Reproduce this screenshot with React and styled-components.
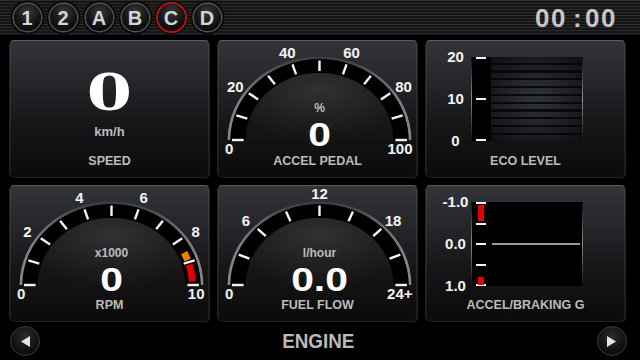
import React from 'react';
import styled, { createGlobalStyle } from 'styled-components';

const Global = createGlobalStyle`
  html, body { margin: 0; padding: 0; background: #000; }
  body { font-family: "Liberation Sans", Arial, sans-serif; }
`;

const SANS = '"Liberation Sans", Arial, sans-serif';

const Screen = styled.div`
  width: 640px;
  height: 360px;
  background: #000;
  display: flex;
  flex-direction: column;
  overflow: hidden;
`;

const TopBar = styled.div`
  height: 35px;
  flex: none;
  box-sizing: border-box;
  display: flex;
  align-items: center;
  gap: 9px;
  padding: 0 23px 0 13.5px;
  background: repeating-linear-gradient(
    to bottom,
    #2c2c2c 0px,
    #2c2c2c 1.5px,
    #151515 1.5px,
    #151515 3px
  );
`;

const ModeButton = styled.div`
  width: 27px;
  height: 27px;
  flex: none;
  border-radius: 50%;
  display: flex;
  align-items: center;
  justify-content: center;
  font: bold 20px/1 ${SANS};
  color: #d4d4d4;
  background: radial-gradient(circle at 50% 30%, #3a3a3a 0%, #161616 50%, #020202 100%);
  box-shadow: 0 0 0 ${p => (p.$active ? '2px' : '1.5px')} ${p => (p.$active ? '#bd1010' : '#545454')},
    0 0 0 3.5px #0b0b0b;
`;

const Clock = styled.div`
  margin-left: auto;
  font: bold 26px/1 ${SANS};
  letter-spacing: 1.5px;
  color: #c6c6c6;
`;

const Colon = styled.span`
  margin: 0 2px 0 6px;
`;

const Grid = styled.div`
  display: grid;
  grid-template-columns: repeat(3, 201px);
  grid-template-rows: 138px 137px;
  gap: 7px;
  padding: 5px 14px 0 9px;
  flex: none;
`;

const Panel = styled.div`
  position: relative;
  box-sizing: border-box;
  display: flex;
  flex-direction: column;
  align-items: center;
  border-radius: 5px;
  border: 1px solid #222327;
  border-top-color: #5a5b60;
  background: linear-gradient(180deg, #333439 0%, #26272b 28%, #151517 65%, #0b0b0b 100%);
  box-shadow: inset 1px 0 0 rgba(255, 255, 255, 0.07), inset -1px 0 0 rgba(255, 255, 255, 0.07);
`;

const Title = styled.div`
  margin-top: auto;
  margin-bottom: 9.5px;
  font: bold 12.5px/13px ${SANS};
  color: #bcbcbc;
  white-space: nowrap;
`;

const BigValue = styled.div`
  margin-top: 24px;
  font: bold 50px/56px "DejaVu Serif", "Liberation Serif", serif;
  color: #fff;
  transform: scaleX(1.3);
`;

const Unit = styled.div`
  margin-top: 3px;
  font: bold 13px/16px ${SANS};
  color: #bdbdbd;
`;

const DialSvg = styled.svg`
  position: absolute;
  top: -8px;
  left: 0;
  overflow: visible;
  pointer-events: none;
`;

const BarRow = styled.div`
  align-self: stretch;
  display: flex;
  align-items: flex-start;
  margin-top: 16px;
  padding-left: 14.5px;
`;

const ScaleLabels = styled.div`
  width: 30px;
  height: 100px;
  margin-top: -8px;
  display: flex;
  flex-direction: column;
  justify-content: space-between;
  align-items: center;
  font: bold 15px/16px ${SANS};
  color: #f4f4f4;
`;

const BarFrame = styled.div`
  width: 112px;
  height: 84px;
  box-sizing: border-box;
  display: flex;
  border-style: solid;
  border-width: 0 1.5px;
  border-image: linear-gradient(to bottom, rgba(110, 110, 118, 0.1), #8c8c94 50%, rgba(110, 110, 118, 0.1)) 1;
  background: #000;
`;

const Track = styled.div`
  position: relative;
  width: 19px;
  flex: none;
  background: #000;
  display: flex;
  flex-direction: column;
  justify-content: space-between;
  align-items: center;
`;

const Tick = styled.div`
  width: 10px;
  height: 2px;
  background: #f2f2f2;
`;

const Marker = styled.div`
  position: absolute;
  left: 6.5px;
  width: 6px;
  background: #e40000;
`;

const Stripes = styled.div`
  flex: 1;
  background:
    repeating-linear-gradient(
      to bottom,
      rgba(0, 0, 0, 0) 0px,
      rgba(0, 0, 0, 0) 5.6px,
      rgba(4, 4, 6, 0.85) 5.6px,
      rgba(4, 4, 6, 0.85) 7.8px
    ),
    radial-gradient(ellipse at 50% 50%, #30333b 0%, #1e2025 55%, #0e0f11 100%);
`;

const Plot = styled.div`
  flex: 1;
  display: flex;
  align-items: center;
  background: #000;
`;

const ZeroLine = styled.div`
  flex: 1;
  height: 2px;
  margin: 0 2px 0 1px;
  background: #9c9c9c;
`;

const BottomBar = styled.div`
  flex: 1;
  display: flex;
  align-items: center;
  justify-content: space-between;
  padding: 0 13px 0 10px;
`;

const NavButton = styled.div`
  width: 30px;
  height: 30px;
  box-sizing: border-box;
  border-radius: 50%;
  border: 1.5px solid #3c3c3c;
  background: radial-gradient(circle at 50% 35%, #2c2c2c 0%, #111 60%, #050505 100%);
  display: flex;
  align-items: center;
  justify-content: center;
`;

const PageName = styled.div`
  font: bold 20.5px/1 ${SANS};
  color: #bababa;
  transform: scaleX(0.92);
`;

function Dial({ id, steps, labels, unit, value, zones = [] }) {
  const cx = 101.5;
  const cy = 107;
  const K = 1.1;
  const P = (f, r) => {
    const a = Math.PI * f;
    return [cx - Math.cos(a) * r * K, cy - Math.sin(a) * r];
  };
  const ring = (r1, r2) =>
    `M ${cx - r2 * K} ${cy} A ${r2 * K} ${r2} 0 0 1 ${cx + r2 * K} ${cy} L ${cx + r1 * K} ${cy} A ${r1 * K} ${r1} 0 0 0 ${cx - r1 * K} ${cy} Z`;
  const dome = (r) => `M ${cx - r * K} ${cy} A ${r * K} ${r} 0 0 1 ${cx + r * K} ${cy} Z`;
  const arc = (f1, f2, r) => {
    const [x1, y1] = P(f1, r);
    const [x2, y2] = P(f2, r);
    return `M ${x1} ${y1} A ${r * K} ${r} 0 0 1 ${x2} ${y2}`;
  };
  const ticks = [];
  for (let i = 0; i <= steps; i++) {
    const f = i / steps;
    const [x1, y1] = P(f, 69);
    const [x2, y2] = P(f, 79.5);
    ticks.push(<line key={i} x1={x1} y1={y1} x2={x2} y2={y2} stroke="#f4f4f4" strokeWidth="2.4" />);
  }
  return (
    <DialSvg width="201" height="146" viewBox="0 0 201 146">
      <defs>
        <linearGradient id={`${id}-rim`} x1="0" y1="0" x2="1" y2="0">
          <stop offset="0" stopColor="#8a8a8e" />
          <stop offset="0.3" stopColor="#4a4a4e" />
          <stop offset="0.5" stopColor="#3a3a3e" />
          <stop offset="0.7" stopColor="#4a4a4e" />
          <stop offset="1" stopColor="#8a8a8e" />
        </linearGradient>
        <radialGradient id={`${id}-dome`} cx="0.5" cy="0.25" r="0.75">
          <stop offset="0" stopColor="#313133" />
          <stop offset="1" stopColor="#141414" />
        </radialGradient>
      </defs>
      <path d={ring(81, 83.5)} fill={`url(#${id}-rim)`} />
      <path d={ring(67, 81)} fill="#000" />
      <path d={dome(67)} fill={`url(#${id}-dome)`} />
      {zones.map((z, i) => (
        <path key={i} d={arc(z.from, z.to, 73.5)} stroke={z.color} strokeWidth="7" fill="none" />
      ))}
      {ticks}
      <g fontFamily={SANS} fontWeight="bold" fontSize="15" fill="#f4f4f4">
        {labels.map(({ f, text }) => {
          if (f === 0)
            return (
              <text key={text} x={cx - 94.5} y={cy + 14} textAnchor="start">
                {text}
              </text>
            );
          if (f === 1)
            return (
              <text key={text} x={cx + 93} y={cy + 14} textAnchor="end">
                {text}
              </text>
            );
          const a = Math.PI * f;
          return (
            <text key={text} x={cx - Math.cos(a) * 104} y={cy - Math.sin(a) * 91.5 + 5.4} textAnchor="middle">
              {text}
            </text>
          );
        })}
      </g>
      <text x={cx} y={cy - 28.2} textAnchor="middle" fontFamily={SANS} fontWeight="bold" fontSize="12" fill="#bdbdbd">
        {unit}
      </text>
      <text
        x={cx}
        y={cy + 6}
        textAnchor="middle"
        fontFamily={SANS}
        fontWeight="bold"
        fontSize="34"
        fill="#fff"
        transform={`translate(${cx} 0) scale(1.2 1) translate(${-cx} 0)`}
      >
        {value}
      </text>
    </DialSvg>
  );
}

function GaugePanel({ title, ...dial }) {
  return (
    <Panel>
      <Dial {...dial} />
      <Title>{title}</Title>
    </Panel>
  );
}

function Arrow({ dir }) {
  return (
    <svg width="9" height="11" viewBox="0 0 9 11">
      {dir === 'left' ? <polygon points="0,5.5 9,0 9,11" fill="#e6e6e6" /> : <polygon points="9,5.5 0,0 0,11" fill="#e6e6e6" />}
    </svg>
  );
}

export default function App() {
  const modes = ['1', '2', 'A', 'B', 'C', 'D'];
  return (
    <Screen>
      <Global />
      <TopBar>
        {modes.map(m => (
          <ModeButton key={m} $active={m === 'C'}>
            {m}
          </ModeButton>
        ))}
        <Clock>
          00<Colon>:</Colon>00
        </Clock>
      </TopBar>
      <Grid>
        <Panel>
          <BigValue>0</BigValue>
          <Unit>km/h</Unit>
          <Title>SPEED</Title>
        </Panel>
        <GaugePanel
          id="pedal"
          title="ACCEL PEDAL"
          steps={10}
          unit="%"
          value="0"
          labels={[
            { f: 0, text: '0' },
            { f: 0.2, text: '20' },
            { f: 0.4, text: '40' },
            { f: 0.6, text: '60' },
            { f: 0.8, text: '80' },
            { f: 1, text: '100' },
          ]}
        />
        <Panel>
          <BarRow>
            <ScaleLabels>
              <span>20</span>
              <span>10</span>
              <span>0</span>
            </ScaleLabels>
            <BarFrame>
              <Track>
                <Tick />
                <Tick />
                <Tick />
              </Track>
              <Stripes />
            </BarFrame>
          </BarRow>
          <Title>ECO LEVEL</Title>
        </Panel>
        <GaugePanel
          id="rpm"
          title="RPM"
          steps={10}
          unit="x1000"
          value="0"
          zones={[
            { from: 0.855, to: 0.89, color: '#ee7d00' },
            { from: 0.91, to: 0.985, color: '#e00000' },
          ]}
          labels={[
            { f: 0, text: '0' },
            { f: 0.2, text: '2' },
            { f: 0.4, text: '4' },
            { f: 0.6, text: '6' },
            { f: 0.8, text: '8' },
            { f: 1, text: '10' },
          ]}
        />
        <GaugePanel
          id="fuel"
          title="FUEL FLOW"
          steps={8}
          unit="l/hour"
          value="0.0"
          labels={[
            { f: 0, text: '0' },
            { f: 0.25, text: '6' },
            { f: 0.5, text: '12' },
            { f: 0.75, text: '18' },
            { f: 1, text: '24+' },
          ]}
        />
        <Panel>
          <BarRow>
            <ScaleLabels>
              <span>-1.0</span>
              <span>0.0</span>
              <span>1.0</span>
            </ScaleLabels>
            <BarFrame>
              <Track>
                <Tick />
                <Tick />
                <Tick />
                <Tick />
                <Tick />
                <Marker style={{ top: '2.5px', height: '16.5px' }} />
                <Marker style={{ top: '74.5px', height: '8px' }} />
              </Track>
              <Plot>
                <ZeroLine />
              </Plot>
            </BarFrame>
          </BarRow>
          <Title>ACCEL/BRAKING G</Title>
        </Panel>
      </Grid>
      <BottomBar>
        <NavButton>
          <Arrow dir="left" />
        </NavButton>
        <PageName>ENGINE</PageName>
        <NavButton>
          <Arrow dir="right" />
        </NavButton>
      </BottomBar>
    </Screen>
  );
}
